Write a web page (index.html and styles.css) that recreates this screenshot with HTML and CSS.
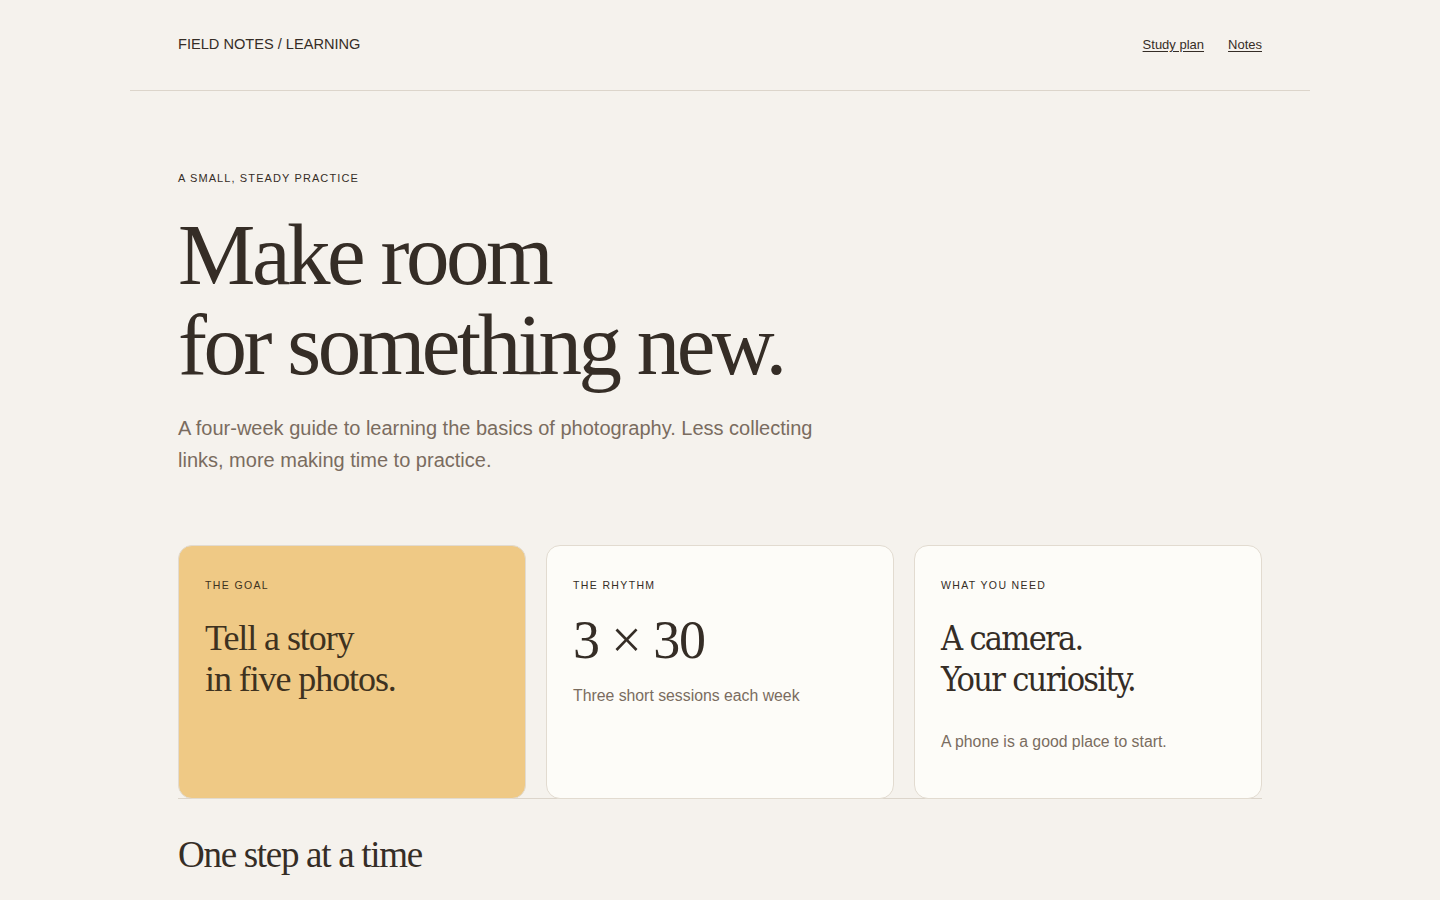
FILE: index.html
```html
<!DOCTYPE html>
<html lang="en">
<head>
<meta charset="utf-8">
<title>Field Notes / Learning</title>
<link rel="stylesheet" href="styles.css">
</head>
<body>
<div class="page">
  <header class="topbar">
    <div class="brand">FIELD NOTES / LEARNING</div>
    <nav class="nav">
      <a href="#">Study plan</a>
      <a href="#">Notes</a>
    </nav>
  </header>
  <main class="main">
    <section class="hero">
      <p class="eyebrow">A SMALL, STEADY PRACTICE</p>
      <h1 class="title">Make room<br>for something new.</h1>
      <p class="lede">A four-week guide to learning the basics of photography. Less collecting links, more making time to practice.</p>
    </section>
    <section class="cards">
      <article class="card card-goal">
        <p class="card-label">THE GOAL</p>
        <h2 class="card-title">Tell a story<br>in five photos.</h2>
      </article>
      <article class="card">
        <p class="card-label">THE RHYTHM</p>
        <p class="card-number">3 × 30</p>
        <p class="card-note">Three short sessions each week</p>
      </article>
      <article class="card">
        <p class="card-label">WHAT YOU NEED</p>
        <h2 class="card-title alt">A camera.<br>Your curiosity.</h2>
        <p class="card-note alt">A phone is a good place to start.</p>
      </article>
    </section>
    <section class="steps">
      <h2 class="steps-title">One step at a time</h2>
    </section>
  </main>
</div>
</body>
</html>
```

FILE: styles.css
```css
html, body {
  margin: 0;
  padding: 0;
}
body {
  background: #f5f2ed;
  color: #352d26;
  font-family: "Liberation Sans", Arial, sans-serif;
}
.page {
  width: 1180px;
  margin: 0 auto;
}
.topbar {
  height: 91px;
  box-sizing: border-box;
  border-bottom: 1px solid #dcd5cb;
  padding: 0 48px 2px;
  display: flex;
  align-items: center;
  justify-content: space-between;
}
.brand {
  font-size: 14.6px;
  color: #352d26;
}
.nav {
  display: flex;
  gap: 24px;
}
.nav a {
  color: #352d26;
  font-size: 13px;
  text-decoration: underline;
  text-underline-offset: 2px;
}
.main {
  padding: 0 48px;
}
.hero {
  padding-top: 81px;
}
.eyebrow {
  margin: 0;
  font-size: 11px;
  letter-spacing: 0.1em;
  color: #352d26;
}
.title {
  margin: 26px 0 0;
  font-family: "Liberation Serif", "Times New Roman", serif;
  font-weight: 400;
  font-size: 87px;
  line-height: 90px;
  letter-spacing: -0.04em;
  color: #352d26;
}
.lede {
  margin: 22px 0 0;
  max-width: 650px;
  font-size: 20px;
  line-height: 32px;
  color: #7a6c5f;
}
.cards {
  margin-top: 69px;
  display: grid;
  grid-template-columns: repeat(3, 1fr);
  gap: 20px;
  border-bottom: 1px solid #dcd5cb;
}
.card {
  height: 254px;
  box-sizing: border-box;
  border: 1px solid #e2dbd0;
  border-radius: 14px;
  background: #fdfcf8;
  padding: 33px 26px;
  margin-bottom: -1px;
}
.card-goal {
  background: #efc985;
}
.card-label {
  margin: 0;
  font-size: 10.5px;
  line-height: 12px;
  letter-spacing: 0.13em;
  color: #352d26;
}
.card-goal .card-label,
.card-goal .card-title {
  color: #3e3220;
}
.card-title {
  margin: 27px 0 0;
  font-family: "Liberation Serif", "Times New Roman", serif;
  font-weight: 400;
  font-size: 36px;
  line-height: 41px;
  letter-spacing: -0.03em;
  color: #352d26;
}
.card-title.alt {
  font-family: "DejaVu Serif Condensed", "DejaVu Serif", serif;
  font-stretch: condensed;
  font-size: 34px;
  letter-spacing: -0.05em;
}
.card-number {
  margin: 19px 0 0;
  font-family: "Liberation Serif", "Times New Roman", serif;
  font-size: 54px;
  line-height: 60px;
  letter-spacing: -0.02em;
  color: #352d26;
}
.card-note {
  margin: 15px 0 0;
  font-size: 15.8px;
  line-height: 22px;
  color: #7a6c5f;
}
.card-note.alt {
  margin-top: 31px;
}
.steps {
  padding-top: 34px;
}
.steps-title {
  margin: 0;
  font-family: "Liberation Serif", "Times New Roman", serif;
  font-weight: 400;
  font-size: 37px;
  line-height: 44px;
  letter-spacing: -0.035em;
  color: #352d26;
}
```
